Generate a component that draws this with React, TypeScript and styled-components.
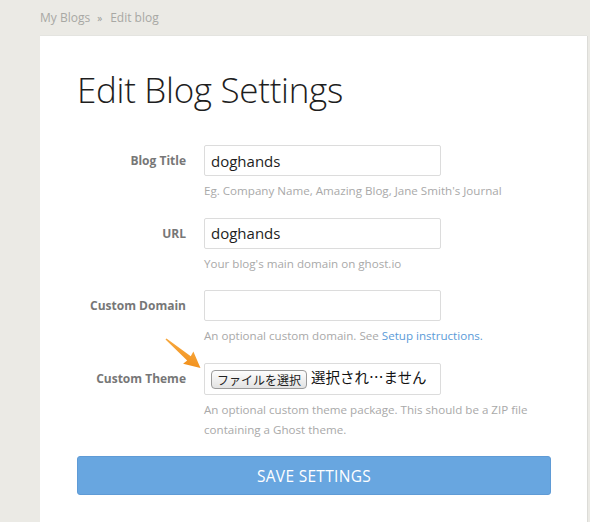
import React from 'react';
import styled, { createGlobalStyle } from 'styled-components';

const GlobalStyle = createGlobalStyle`
  html, body {
    margin: 0;
    padding: 0;
    background: #ebeae5;
  }
  body {
    font-family: 'Open Sans', 'Noto Sans', sans-serif;
    -webkit-font-smoothing: antialiased;
  }
`;

const Page = styled.div`
  padding-left: 40px;
  width: 547px;
`;

const Breadcrumb = styled.div`
  height: 36px;
  display: flex;
  align-items: center;
  font-size: 12px;
  color: #a8a8a4;
  padding-bottom: 1px;
  box-sizing: border-box;
`;

const Sep = styled.span`
  font-size: 10px;
  color: #9a9a96;
  margin: 0 8px 0 7px;
`;

const Card = styled.div`
  background: #fff;
  min-height: 486px;
  padding: 32px 36px 20px 37px;
  box-sizing: border-box;
  box-shadow: 1px 0 0 #dcdcd8, 0 -1px 0 #e4e4e0;
`;

const Title = styled.h1`
  margin: 0 0 34px 0;
  font-size: 35px;
  line-height: 43px;
  font-weight: 300;
  color: #1e1e1e;
  letter-spacing: -0.3px;
`;

const Field = styled.div`
  position: relative;
  display: grid;
  grid-template-columns: 109px 1fr;
  column-gap: 18px;
  margin-bottom: 16.5px;
`;

const Label = styled.label<{ $tall?: boolean }>`
  text-align: right;
  font-size: 12px;
  font-weight: 700;
  color: #777;
  height: ${p => (p.$tall ? 32 : 31)}px;
  line-height: ${p => (p.$tall ? 32 : 31)}px;
`;

const Control = styled.div`
  display: flex;
  flex-direction: column;
`;

const Box = styled.div<{ $tall?: boolean }>`
  width: 237px;
  height: ${p => (p.$tall ? 32 : 31)}px;
  box-sizing: border-box;
  border: 1px solid #dcdcdc;
  border-radius: 2px;
  background: #fff;
  display: flex;
  align-items: center;
  padding: 0 6px;
  white-space: nowrap;
`;

const Input = styled.input`
  border: 0;
  outline: none;
  padding: 0;
  width: 100%;
  font-family: 'Open Sans', sans-serif;
  font-size: 15px;
  color: #1d1d1d;
  background: transparent;
`;

const FileButton = styled.span`
  flex-shrink: 0;
  font-family: 'Noto Sans CJK JP', sans-serif;
  font-size: 12px;
  line-height: 17px;
  padding: 0 5px;
  border: 1px solid #9a9a9a;
  border-radius: 4px;
  background: linear-gradient(#fdfdfd, #e3e3e3);
  color: #222;
  margin-top: 2px;
`;

const FileName = styled.span`
  flex-shrink: 0;
  font-family: 'Noto Sans CJK JP', sans-serif;
  font-size: 14.5px;
  color: #111;
  margin-left: 4px;
  margin-top: -4px;
`;

const Help = styled.p`
  margin: 5px 0 0;
  max-width: 340px;
  font-size: 11.6px;
  line-height: 20px;
  color: #a9a9a9;
`;

const Link = styled.a`
  color: #5b9bd8;
  text-decoration: none;
`;

const Pointer = styled.svg`
  position: absolute;
  left: 86px;
  top: -26px;
  pointer-events: none;
`;

const SaveButton = styled.button`
  display: block;
  width: 474px;
  height: 39px;
  border: 1px solid #5f9bd6;
  border-radius: 3px;
  background: #68a6e0;
  color: #fff;
  font-family: 'Open Sans', sans-serif;
  font-size: 15.5px;
  letter-spacing: 0.3px;
  text-transform: uppercase;
  cursor: pointer;
`;

const Arrow = () => (
  <Pointer width="50" height="44" viewBox="0 0 50 44">
    <defs>
      <linearGradient id="arrowFill" x1="0" y1="0" x2="1" y2="1">
        <stop offset="0" stopColor="#f8b04a" />
        <stop offset="1" stopColor="#f18a12" />
      </linearGradient>
    </defs>
    <g transform="translate(3 2) rotate(40)">
      <polygon
        points="0,-0.8 30,-2.8 29,-8 45,0 29,8 30,2.8 0,0.8"
        fill="url(#arrowFill)"
      />
    </g>
  </Pointer>
);

export default () => {
  return (
    <Page>
      <GlobalStyle />
      <Breadcrumb>
        My Blogs<Sep>»</Sep>Edit blog
      </Breadcrumb>
      <Card>
        <Title>Edit Blog Settings</Title>

        <Field>
          <Label>Blog Title</Label>
          <Control>
            <Box>
              <Input defaultValue="doghands" />
            </Box>
            <Help>Eg. Company Name, Amazing Blog, Jane Smith's Journal</Help>
          </Control>
        </Field>

        <Field>
          <Label>URL</Label>
          <Control>
            <Box>
              <Input defaultValue="doghands" />
            </Box>
            <Help>Your blog's main domain on ghost.io</Help>
          </Control>
        </Field>

        <Field>
          <Label>Custom Domain</Label>
          <Control>
            <Box>
              <Input defaultValue="" />
            </Box>
            <Help>
              An optional custom domain. See <Link href="#">Setup instructions.</Link>
            </Help>
          </Control>
        </Field>

        <Field>
          <Arrow />
          <Label $tall>Custom Theme</Label>
          <Control>
            <Box $tall>
              <FileButton>ファイルを選択</FileButton>
              <FileName>選択され…ません</FileName>
            </Box>
            <Help>
              An optional custom theme package. This should be a ZIP file containing a Ghost
              theme.
            </Help>
          </Control>
        </Field>

        <SaveButton>Save Settings</SaveButton>
      </Card>
    </Page>
  );
};
